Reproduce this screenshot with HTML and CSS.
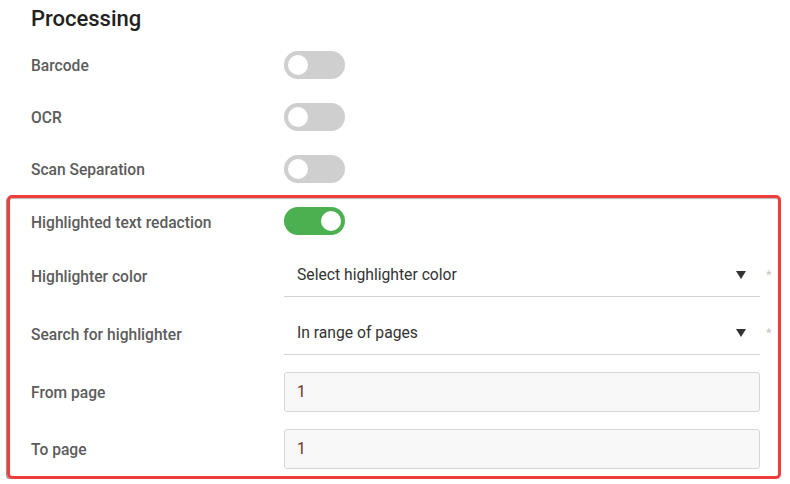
FILE: index.html
```html
<!DOCTYPE html>
<html lang="en">
  <head>
    <meta charset="UTF-8" />
    <meta name="viewport" content="width=device-width, initial-scale=1.0" />
    <title>Processing</title>
    <link rel="stylesheet" href="styles.css">
  </head>
  <body>
    <div class="processing">
      <h2>Processing</h2>

      <div class="row">
        <span class="label">Barcode</span>
        <span class="toggle"><span class="knob"></span></span>
      </div>
      <div class="row">
        <span class="label">OCR</span>
        <span class="toggle"><span class="knob"></span></span>
      </div>
      <div class="row">
        <span class="label">Scan Separation</span>
        <span class="toggle"><span class="knob"></span></span>
      </div>

      <div class="highlight-box">
        <div class="row row-toggle">
          <span class="label">Highlighted text redaction</span>
          <span class="toggle on"><span class="knob"></span></span>
        </div>
        <div class="row row-select">
          <span class="label">Highlighter color</span>
          <div class="select">
            <span>Select highlighter color</span>
            <span class="arrow"></span>
          </div>
          <span class="required">*</span>
        </div>
        <div class="row row-select second">
          <span class="label">Search for highlighter</span>
          <div class="select">
            <span>In range of pages</span>
            <span class="arrow"></span>
          </div>
          <span class="required">*</span>
        </div>
        <div class="row row-input">
          <span class="label">From page</span>
          <input type="text" value="1" />
        </div>
        <div class="row row-input">
          <span class="label">To page</span>
          <input type="text" value="1" />
        </div>
      </div>
    </div>
  </body>
</html>
```

FILE: styles.css
```css
* {
  margin: 0;
  padding: 0;
  box-sizing: border-box;
}
body {
  font-family: "Roboto", sans-serif;
  background-color: #fff;
  color: #333;
}

.processing {
  width: 790px;
  padding: 0 9px 0 7px;
}

h2 {
  margin: 5px 0 6px 24px;
  font-size: 22px;
  line-height: 28px;
  font-weight: 500;
  color: #222;
}

.row {
  display: grid;
  grid-template-columns: 253px 476px 1fr;
  align-items: center;
  height: 52px;
  padding-left: 24px;
}

.label {
  padding-top: 2px;
  font-size: 15.6px;
  font-weight: 500;
  color: #5c5c5c;
}

.toggle {
  position: relative;
  display: block;
  width: 61px;
  height: 28px;
  border-radius: 14px;
  background-color: #cfcfcf;
}
.toggle .knob {
  position: absolute;
  top: 4px;
  left: 4px;
  width: 20px;
  height: 20px;
  border-radius: 50%;
  background-color: #fff;
}
.toggle.on {
  background-color: #4caf50;
}
.toggle.on .knob {
  left: 37px;
}

.highlight-box {
  border: 3px solid #ef3d3d;
  border-radius: 5px;
  padding: 0 0 7px 0;
  box-shadow: -1px 1px 1px rgba(0, 0, 0, 0.45), inset 0 1px 1px rgba(0, 0, 0, 0.3);
}
.highlight-box .row {
  padding-left: 21px;
}

.row-toggle {
  height: 46px;
}
.row-toggle .label {
  padding-top: 3px;
}

.row-select {
  height: 47px;
  margin-top: 6px;
}
.row-select.second {
  margin-top: 11px;
}
.row-select .label {
  padding-top: 7px;
}

.select {
  display: flex;
  align-items: center;
  justify-content: space-between;
  height: 47px;
  padding: 3px 13px 0;
  border-bottom: 1px solid #d4d4d4;
  font-size: 15.7px;
  color: #333;
}
.arrow {
  width: 0;
  height: 0;
  margin-right: 1px;
  border-left: 5px solid transparent;
  border-right: 5px solid transparent;
  border-top: 8px solid #333;
}
.required {
  align-self: center;
  margin-left: 6px;
  padding-top: 2px;
  font-size: 13px;
  color: #c8c8c8;
}

.row-input {
  height: 40px;
  margin-top: 17px;
}
.row-input .label {
  padding-top: 2px;
}
.row-input input {
  width: 476px;
  height: 40px;
  padding: 0 12px;
  border: 1px solid #d6d6d6;
  border-radius: 3px;
  background-color: #f8f8f8;
  font-family: "Roboto", sans-serif;
  font-size: 15.6px;
  color: #6b3424;
  outline: none;
}
```
